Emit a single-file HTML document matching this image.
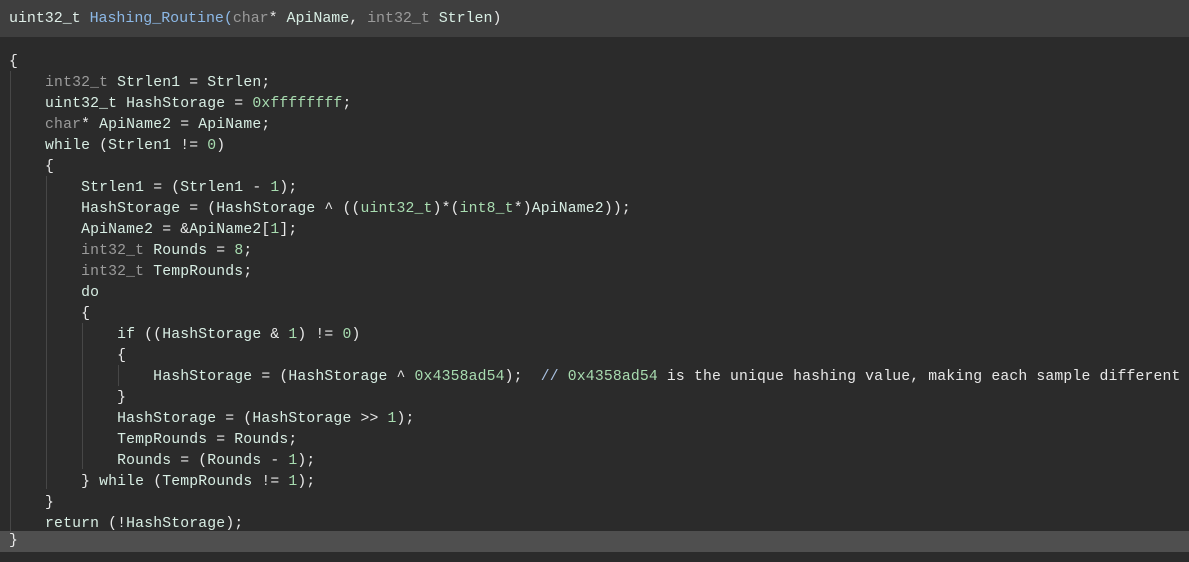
<!DOCTYPE html>
<html><head><meta charset="utf-8"><style>
html,body{margin:0;padding:0;}
body{width:1189px;height:562px;background:#2b2b2b;overflow:hidden;position:relative;font-family:"Liberation Mono",monospace;font-size:14.75px;color:#d8eee4;}
.hdr{position:absolute;left:0;top:0;width:1189px;height:37px;background:#3f3f3f;}
.hdr .t{position:absolute;left:9px;top:9px;font-size:15px;white-space:pre;line-height:20px;letter-spacing:-0.05px;}
.ln{position:absolute;left:9px;height:21px;line-height:21px;white-space:pre;letter-spacing:0.16px;margin-top:2px;}
.hl{position:absolute;left:0;top:531px;width:1189px;height:21px;background:#4f4f4f;}
.g{position:absolute;width:1px;background:#474747;}
.ty{color:#9a9a9a}.fn{color:#8cb8e6}.n{color:#a8dcb0}.w{color:#e8e8e8}.c{color:#a8c0e0}.k{color:#dfeee8}
</style></head><body>
<div class="hdr"><div class="t"><span class="k">uint32_t</span> <span class="fn">Hashing_Routine(</span><span class="ty">char</span><span class="w">*</span> ApiName<span class="w">,</span> <span class="ty">int32_t</span> Strlen<span class="w">)</span></div></div>
<div class="hl"></div>
<div class="g" style="left:10px;top:71px;height:460px"></div>
<div class="g" style="left:46px;top:176px;height:313px"></div>
<div class="g" style="left:82px;top:323px;height:146px"></div>
<div class="g" style="left:118px;top:365px;height:21px"></div>
<div class="ln w" style="top:50px">{</div>
<div class="ln" style="top:71px">    <span class="ty">int32_t</span> Strlen1 <span class="w">=</span> Strlen<span class="w">;</span></div>
<div class="ln" style="top:92px">    uint32_t HashStorage <span class="w">=</span> <span class="n">0xffffffff</span><span class="w">;</span></div>
<div class="ln" style="top:113px">    <span class="ty">char</span><span class="w">*</span> ApiName2 <span class="w">=</span> ApiName<span class="w">;</span></div>
<div class="ln" style="top:134px">    while <span class="w">(</span>Strlen1 <span class="w">!=</span> <span class="n">0</span><span class="w">)</span></div>
<div class="ln w" style="top:155px">    {</div>
<div class="ln" style="top:176px">        Strlen1 <span class="w">= (</span>Strlen1 <span class="w">-</span> <span class="n">1</span><span class="w">);</span></div>
<div class="ln" style="top:197px">        HashStorage <span class="w">= (</span>HashStorage <span class="w">^ ((</span><span class="n">uint32_t</span><span class="w">)*(</span><span class="n">int8_t</span><span class="w">*)</span>ApiName2<span class="w">));</span></div>
<div class="ln" style="top:218px">        ApiName2 <span class="w">= &amp;</span>ApiName2<span class="w">[</span><span class="n">1</span><span class="w">];</span></div>
<div class="ln" style="top:239px">        <span class="ty">int32_t</span> Rounds <span class="w">=</span> <span class="n">8</span><span class="w">;</span></div>
<div class="ln" style="top:260px">        <span class="ty">int32_t</span> TempRounds<span class="w">;</span></div>
<div class="ln" style="top:281px">        do</div>
<div class="ln w" style="top:302px">        {</div>
<div class="ln" style="top:323px">            if <span class="w">((</span>HashStorage <span class="w">&amp;</span> <span class="n">1</span><span class="w">) !=</span> <span class="n">0</span><span class="w">)</span></div>
<div class="ln w" style="top:344px">            {</div>
<div class="ln" style="top:365px">                HashStorage <span class="w">= (</span>HashStorage <span class="w">^</span> <span class="n">0x4358ad54</span><span class="w">);</span>  <span class="c">//</span> <span class="n">0x4358ad54</span> <span class="w">is the unique hashing value, making each sample different</span></div>
<div class="ln w" style="top:386px">            }</div>
<div class="ln" style="top:407px">            HashStorage <span class="w">= (</span>HashStorage <span class="w">&gt;&gt;</span> <span class="n">1</span><span class="w">);</span></div>
<div class="ln" style="top:428px">            TempRounds <span class="w">=</span> Rounds<span class="w">;</span></div>
<div class="ln" style="top:449px">            Rounds <span class="w">= (</span>Rounds <span class="w">-</span> <span class="n">1</span><span class="w">);</span></div>
<div class="ln" style="top:470px">        <span class="w">}</span> while <span class="w">(</span>TempRounds <span class="w">!=</span> <span class="n">1</span><span class="w">);</span></div>
<div class="ln w" style="top:491px">    }</div>
<div class="ln" style="top:512px">    return <span class="w">(!</span>HashStorage<span class="w">);</span></div>
<div class="ln w" style="top:529px">}</div>
</body></html>
